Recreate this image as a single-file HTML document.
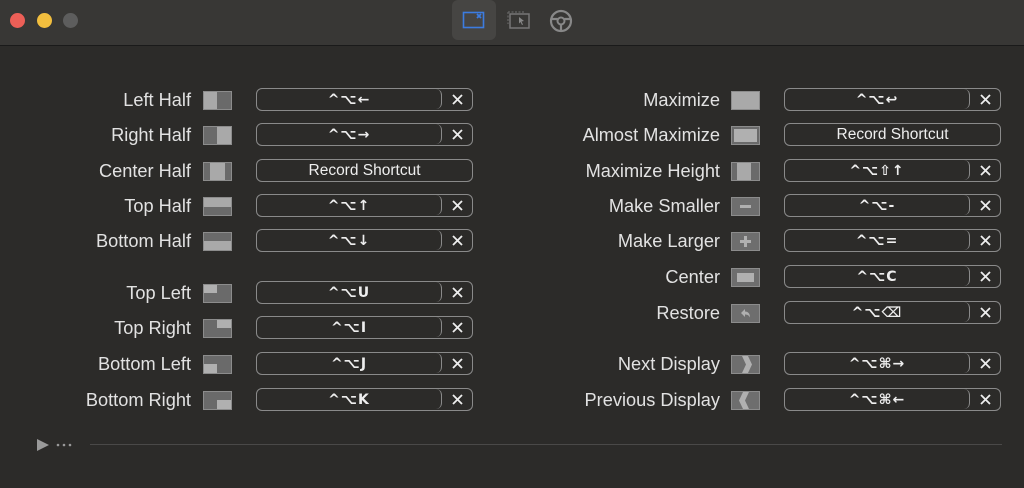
<!DOCTYPE html>
<html><head><meta charset="utf-8"><style>
*{margin:0;padding:0;box-sizing:border-box}
body{width:1024px;height:488px;background:#2c2b29;position:relative;overflow:hidden;font-family:"Liberation Sans",sans-serif;color:#e2e2e2}
.tb{position:absolute;left:0;top:0;width:1024px;height:46px;background:#383735;border-bottom:1px solid #1a1a1a}
.dot{position:absolute;top:13px;width:15px;height:15px;border-radius:50%}
.lab{position:absolute;font-size:18.2px;text-align:right;height:22px;line-height:22px;white-space:nowrap}
.ico{position:absolute;width:29px;height:19px;background:#a9a9a9;border:1px solid #8c8c8c;overflow:hidden}
.ico i{position:absolute;background:#6a6a6a}
.box{position:absolute;width:217px;height:23px;border:1.5px solid #8a8a8a;border-radius:6px;font-size:15.5px;line-height:21px;text-align:center;color:#eee}
.box .k{position:absolute;left:0;top:0;width:185px;height:20px;border-right:1.5px solid #8a8a8a;border-radius:6px;font-family:"DejaVu Sans",sans-serif;font-weight:bold;font-size:14px;line-height:22px;letter-spacing:1px}
.box .x{position:absolute;right:9px;top:5px;width:11px;height:11px}
</style></head><body>
<svg width="0" height="0" style="position:absolute"><defs><symbol id="x" viewBox="0 0 11 11"><path d="M1 1l9 9M10 1l-9 9" stroke="#eee" stroke-width="1.8"/></symbol></defs></svg>
<div class="tb">
<div class="dot" style="left:10px;background:#ec5f57"></div>
<div class="dot" style="left:37px;background:#f2be3e"></div>
<div class="dot" style="left:63px;background:#5d5d5d"></div>
<div style="position:absolute;left:452px;top:0;width:44px;height:40px;background:#464543;border-radius:6px"></div>
<svg style="position:absolute;left:462px;top:10px" width="24" height="20"><rect x="1.5" y="2.5" width="20" height="15" fill="none" stroke="#3c7ce0" stroke-width="1.6"/><path d="M15 4l4 4M19 4l-4 4" stroke="#3c7ce0" stroke-width="1.8"/></svg>
<svg style="position:absolute;left:506px;top:9px" width="26" height="22"><rect x="4" y="5" width="19" height="14" fill="none" stroke="#777" stroke-width="1.5"/><path d="M2 3h17M2 3v12" stroke="#666" stroke-width="1.2" stroke-dasharray="2 1.5"/><path d="M13 8l5 4-2.5.5 1.5 3-1 .5-1.5-3-1.5 1.5z" fill="#888"/></svg>
<svg style="position:absolute;left:548px;top:8px" width="26" height="26"><circle cx="13" cy="13" r="10" fill="none" stroke="#888" stroke-width="2.2"/><circle cx="13" cy="13" r="3.5" fill="none" stroke="#888" stroke-width="2"/><path d="M4 11h5.5M16.5 11H22M13 16.5V22" stroke="#888" stroke-width="2.2"/></svg>
</div>

<div class="lab" style="right:833px;top:89px">Left Half</div>
<div class="ico" style="left:203px;top:91px"><i style="left:13px;top:0;width:14px;height:17px"></i></div>
<div class="box" style="left:256px;top:88px"><div class="k">^⌥←</div><svg class="x"><use href="#x"/></svg></div>

<div class="lab" style="right:833px;top:124px">Right Half</div>
<div class="ico" style="left:203px;top:126px"><i style="left:0;top:0;width:13px;height:17px"></i></div>
<div class="box" style="left:256px;top:123px"><div class="k">^⌥→</div><svg class="x"><use href="#x"/></svg></div>

<div class="lab" style="right:833px;top:160px">Center Half</div>
<div class="ico" style="left:203px;top:162px"><i style="left:0;top:0;width:6px;height:17px"></i><i style="right:0;top:0;width:6px;height:17px"></i></div>
<div class="box" style="left:256px;top:159px">Record Shortcut</div>

<div class="lab" style="right:833px;top:195px">Top Half</div>
<div class="ico" style="left:203px;top:197px"><i style="left:0;top:9px;width:27px;height:8px"></i></div>
<div class="box" style="left:256px;top:194px"><div class="k">^⌥↑</div><svg class="x"><use href="#x"/></svg></div>

<div class="lab" style="right:833px;top:230px">Bottom Half</div>
<div class="ico" style="left:203px;top:232px"><i style="left:0;top:0;width:27px;height:8px"></i></div>
<div class="box" style="left:256px;top:229px"><div class="k">^⌥↓</div><svg class="x"><use href="#x"/></svg></div>

<div class="lab" style="right:833px;top:282px">Top Left</div>
<div class="ico" style="left:203px;top:284px;background:#6a6a6a"><i style="left:0;top:0;width:13px;height:8px;background:#b0b0b0"></i></div>
<div class="box" style="left:256px;top:281px"><div class="k">^⌥U</div><svg class="x"><use href="#x"/></svg></div>

<div class="lab" style="right:833px;top:317px">Top Right</div>
<div class="ico" style="left:203px;top:319px;background:#6a6a6a"><i style="right:0;top:0;width:14px;height:8px;background:#b0b0b0"></i></div>
<div class="box" style="left:256px;top:316px"><div class="k">^⌥I</div><svg class="x"><use href="#x"/></svg></div>

<div class="lab" style="right:833px;top:353px">Bottom Left</div>
<div class="ico" style="left:203px;top:355px;background:#6a6a6a"><i style="left:0;bottom:0;width:13px;height:9px;background:#b0b0b0"></i></div>
<div class="box" style="left:256px;top:352px"><div class="k">^⌥J</div><svg class="x"><use href="#x"/></svg></div>

<div class="lab" style="right:833px;top:389px">Bottom Right</div>
<div class="ico" style="left:203px;top:391px;background:#6a6a6a"><i style="right:0;bottom:0;width:14px;height:9px;background:#b0b0b0"></i></div>
<div class="box" style="left:256px;top:388px"><div class="k">^⌥K</div><svg class="x"><use href="#x"/></svg></div>

<div class="lab" style="right:304px;top:89px">Maximize</div>
<div class="ico" style="left:731px;top:91px"></div>
<div class="box" style="left:784px;top:88px"><div class="k">^⌥↩</div><svg class="x"><use href="#x"/></svg></div>

<div class="lab" style="right:304px;top:124px">Almost Maximize</div>
<div class="ico" style="left:731px;top:126px;background:#6a6a6a"><i style="left:2px;top:2px;width:23px;height:13px;background:#b0b0b0"></i></div>
<div class="box" style="left:784px;top:123px">Record Shortcut</div>

<div class="lab" style="right:304px;top:160px">Maximize Height</div>
<div class="ico" style="left:731px;top:162px"><i style="left:0;top:0;width:5px;height:17px"></i><i style="right:0;top:0;width:8px;height:17px"></i></div>
<div class="box" style="left:784px;top:159px"><div class="k">^⌥⇧↑</div><svg class="x"><use href="#x"/></svg></div>

<div class="lab" style="right:304px;top:195px">Make Smaller</div>
<div class="ico" style="left:731px;top:197px;background:#6e6e6e"><i style="left:8px;top:7px;width:11px;height:3px;background:#b0b0b0"></i></div>
<div class="box" style="left:784px;top:194px"><div class="k">^⌥-</div><svg class="x"><use href="#x"/></svg></div>

<div class="lab" style="right:304px;top:230px">Make Larger</div>
<div class="ico" style="left:731px;top:232px;background:#6e6e6e"><i style="left:8px;top:7px;width:11px;height:3px;background:#b0b0b0"></i><i style="left:12px;top:3px;width:3px;height:11px;background:#b0b0b0"></i></div>
<div class="box" style="left:784px;top:229px"><div class="k">^⌥=</div><svg class="x"><use href="#x"/></svg></div>

<div class="lab" style="right:304px;top:266px">Center</div>
<div class="ico" style="left:731px;top:268px;background:#6e6e6e"><i style="left:5px;top:4px;width:17px;height:9px;background:#b0b0b0"></i></div>
<div class="box" style="left:784px;top:265px"><div class="k">^⌥C</div><svg class="x"><use href="#x"/></svg></div>

<div class="lab" style="right:304px;top:302px">Restore</div>
<div class="ico" style="left:731px;top:304px;background:#6e6e6e"><svg width="27" height="17" style="position:absolute;left:0;top:0"><path d="M9 8l4-4v2.5c3 0 5 2 5 6-1-2-2.5-3-5-3V12z" fill="#b0b0b0"/></svg></div>
<div class="box" style="left:784px;top:301px"><div class="k">^⌥⌫</div><svg class="x"><use href="#x"/></svg></div>

<div class="lab" style="right:304px;top:353px">Next Display</div>
<div class="ico" style="left:731px;top:355px;background:#6e6e6e"><svg width="27" height="17" style="position:absolute;left:0;top:0"><path d="M10 0h6l4 8.5-4 8.5h-6l4-8.5z" fill="#b0b0b0"/></svg></div>
<div class="box" style="left:784px;top:352px"><div class="k">^⌥⌘→</div><svg class="x"><use href="#x"/></svg></div>

<div class="lab" style="right:304px;top:389px">Previous Display</div>
<div class="ico" style="left:731px;top:391px;background:#6e6e6e"><svg width="27" height="17" style="position:absolute;left:0;top:0"><path d="M17 0h-6l-4 8.5 4 8.5h6l-4-8.5z" fill="#b0b0b0"/></svg></div>
<div class="box" style="left:784px;top:388px"><div class="k">^⌥⌘←</div><svg class="x"><use href="#x"/></svg></div>

<svg style="position:absolute;left:36px;top:438px" width="40" height="14"><path d="M1 1l12 6-12 6z" fill="#9a9a9a"/><circle cx="22" cy="7" r="1.3" fill="#999"/><circle cx="28" cy="7" r="1.3" fill="#999"/><circle cx="34" cy="7" r="1.3" fill="#999"/></svg>
<div style="position:absolute;left:90px;top:444px;width:912px;height:1px;background:#4a4948"></div>
</body></html>
